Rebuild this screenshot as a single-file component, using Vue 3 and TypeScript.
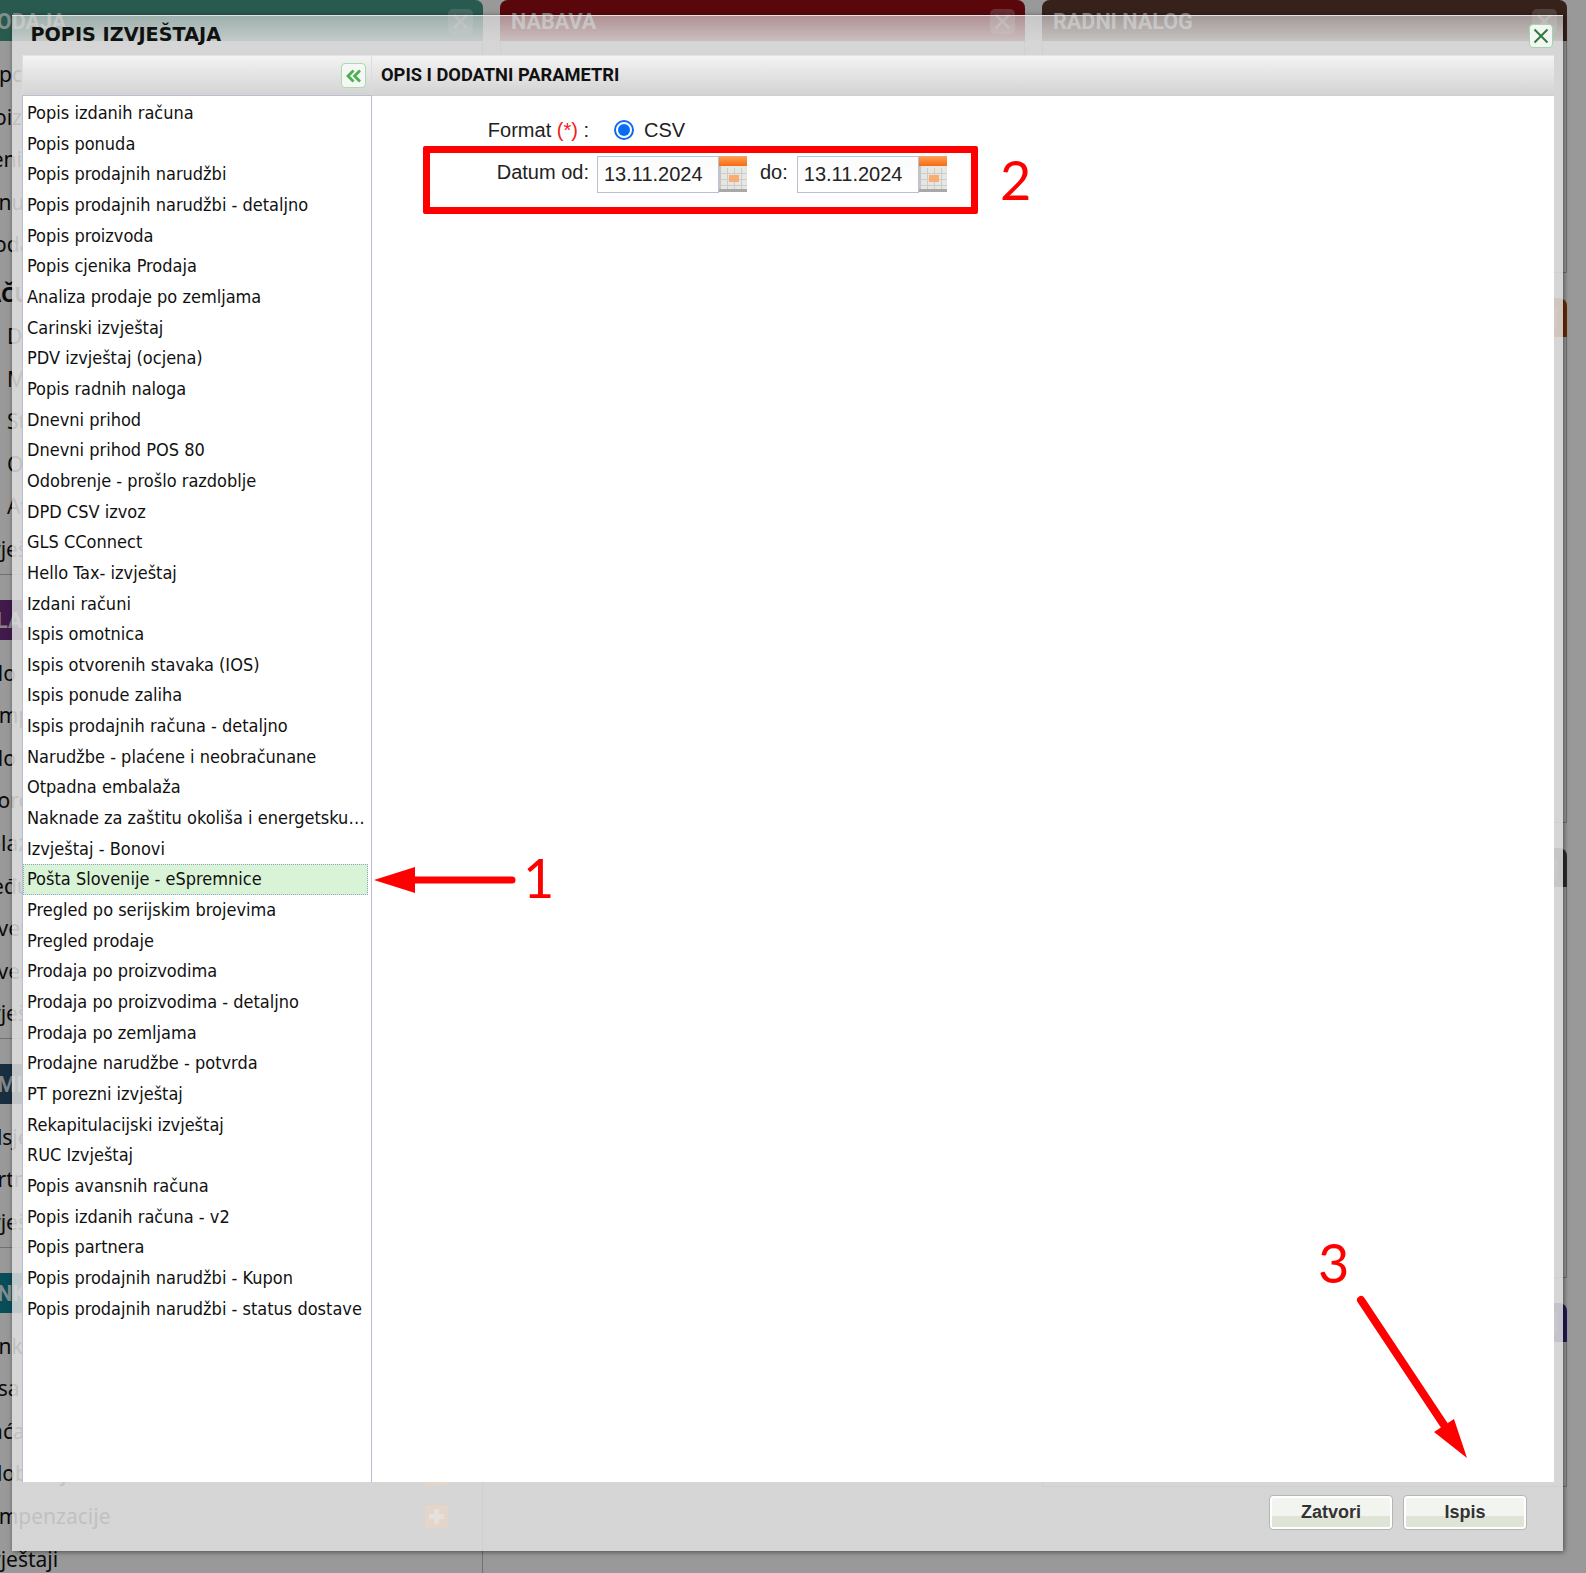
<script setup lang="ts">
interface Row { text: string; sub?: boolean; indent?: boolean; add?: boolean }
interface Panel { title: string; color: string; head: number; rows: Row[] }

const r = (list: string[], indent = false): Row[] => list.map((text) => ({ text, indent }))

const leftPanels: Panel[] = [
  {
    title: 'PRODAJA', color: '#449685', head: 41,
    rows: [
      ...r(['Kupci', 'Proizvodi', 'Cjenici', 'Ponude', 'Prodaja']),
      { text: 'RAČUNI', sub: true },
      ...r(['Dokumenti', 'Maloprodaja', 'Storna', 'Odobrenja', 'Avansi'], true),
      ...r(['Izvještaji']),
    ],
  },
  {
    title: 'SKLADIŠTE', color: '#6a2c7e', head: 40,
    rows: r(['Kalo', 'Kompletiranje', 'Kalo', 'Sporedni', 'Dolazne', 'Međuskladišnica', 'Reverz', 'Reversi', 'Izvještaji']),
  },
  {
    title: 'KOMITENTI', color: '#2b4d6a', head: 40,
    rows: r(['Odsjeci', 'Partneri', 'Izvještaji']),
  },
  {
    title: 'BANKA', color: '#0f8094', head: 40,
    rows: [
      ...r(['Banke', 'Kasa', 'Plaćanja']),
      { text: 'Odobrenja', add: true },
      { text: 'Kompenzacije', add: true },
      { text: 'Izvještaji' },
    ],
  },
]

const middleTitle = 'NABAVA'
const rightPanels = [
  { title: 'RADNI NALOG', color: '#5c372d', head: 41, height: 273 },
  { title: 'FINANCIJE', color: '#b04a08', head: 39, height: 525 },
  { title: 'SERVIS', color: '#4a4a4a', head: 39, height: 430 },
  { title: 'POSTAVKE', color: '#3a2a90', head: 39, height: 184 },
]

const reports = [
  'Popis izdanih računa', 'Popis ponuda', 'Popis prodajnih narudžbi', 'Popis prodajnih narudžbi - detaljno',
  'Popis proizvoda', 'Popis cjenika Prodaja', 'Analiza prodaje po zemljama', 'Carinski izvještaj',
  'PDV izvještaj (ocjena)', 'Popis radnih naloga', 'Dnevni prihod', 'Dnevni prihod POS 80',
  'Odobrenje - prošlo razdoblje', 'DPD CSV izvoz', 'GLS CConnect', 'Hello Tax- izvještaj', 'Izdani računi',
  'Ispis omotnica', 'Ispis otvorenih stavaka (IOS)', 'Ispis ponude zaliha', 'Ispis prodajnih računa - detaljno',
  'Narudžbe - plaćene i neobračunane', 'Otpadna embalaža', 'Naknade za zaštitu okoliša i energetsku ...',
  'Izvještaj - Bonovi', 'Pošta Slovenije - eSpremnice', 'Pregled po serijskim brojevima', 'Pregled prodaje',
  'Prodaja po proizvodima', 'Prodaja po proizvodima - detaljno', 'Prodaja po zemljama', 'Prodajne narudžbe - potvrda',
  'PT porezni izvještaj', 'Rekapitulacijski izvještaj', 'RUC Izvještaj', 'Popis avansnih računa',
  'Popis izdanih računa - v2', 'Popis partnera', 'Popis prodajnih narudžbi - Kupon',
  'Popis prodajnih narudžbi - status dostave',
]
const selected = 'Pošta Slovenije - eSpremnice'
const dates = [
  { label: 'Datum od:', value: '13.11.2024', cls: 'first' },
  { label: 'do:', value: '13.11.2024', cls: 'second' },
]
</script>

<template>
  <div class="stage">
    <!-- page behind the modal -->
    <div class="columns">
      <div class="column">
        <section v-for="p in leftPanels" :key="p.title" class="panel">
          <header class="panel-head" :style="{ background: p.color, height: p.head + 'px' }">
            <span>{{ p.title }}</span>
            <i class="tile-x"><svg viewBox="0 0 25 25" width="25" height="25"><path d="M6 6 19 19M19 6 6 19" stroke="#fff" stroke-opacity=".5" stroke-width="2.500" fill="none"/></svg></i>
          </header>
          <ul class="panel-rows">
            <li v-for="(row, i) in p.rows" :key="i" :class="{ sub: row.sub, indent: row.indent }">
              <span>{{ row.text }}</span><b v-if="row.add" class="add"><i></i></b>
            </li>
          </ul>
        </section>
      </div>
      <div class="column">
        <section class="panel mid">
          <header class="panel-head" style="background:#960d14;height:41px">
            <span>{{ middleTitle }}</span>
            <i class="tile-x"><svg viewBox="0 0 25 25" width="25" height="25"><path d="M6 6 19 19M19 6 6 19" stroke="#fff" stroke-opacity=".5" stroke-width="2.500" fill="none"/></svg></i>
          </header>
        </section>
      </div>
      <div class="column">
        <section v-for="p in rightPanels" :key="p.title" class="panel" :style="{ height: p.height + 'px' }">
          <header class="panel-head" :style="{ background: p.color, height: p.head + 'px' }">
            <span>{{ p.title }}</span>
            <i class="tile-x"><svg viewBox="0 0 25 25" width="25" height="25"><path d="M6 6 19 19M19 6 6 19" stroke="#fff" stroke-opacity=".5" stroke-width="2.500" fill="none"/></svg></i>
          </header>
        </section>
      </div>
    </div>
    <div class="overlay"></div>

    <!-- modal -->
    <div class="dialog">
      <div class="dialog-title">
        <h1>POPIS IZVJEŠTAJA</h1>
        <button class="close" aria-label="Zatvori">
          <svg viewBox="0 0 18 18" width="18" height="18"><path d="M2.5 2.5 15.5 15.5M15.5 2.5 2.5 15.5" stroke="#2f7a3d" stroke-width="2" fill="none"/></svg>
        </button>
      </div>
      <div class="body">
        <div class="left">
          <div class="bar bar-left">
            <button class="collapse" aria-label="Sakrij">
              <svg viewBox="0 0 16 14" width="16" height="14"><path d="M7.5 1.5 2 7l5.5 5.5M14 1.5 8.5 7l5.5 5.5" stroke="#4caf50" stroke-width="2.800" fill="none"/></svg>
            </button>
          </div>
          <ul class="reports">
            <li v-for="name in reports" :key="name" :class="{ active: name === selected }">{{ name }}</li>
          </ul>
        </div>
        <div class="right">
          <div class="bar bar-right">OPIS I DODATNI PARAMETRI</div>
          <div class="form">
            <div class="line line-format">
              <label class="lbl">Format <em>(*)</em> :</label>
              <span class="radio"><i></i></span>
              <span class="csv">CSV</span>
            </div>
            <div class="line line-dates">
              <template v-for="d in dates" :key="d.cls">
                <label :class="['date-lbl', d.cls]">{{ d.label }}</label>
                <input class="date" type="text" :value="d.value" readonly />
                <svg class="cal" viewBox="0 0 28 37" width="28" height="37">
                  <defs>
                    <linearGradient id="calTop" x1="0" y1="0" x2="0" y2="1">
                      <stop offset="0" stop-color="#ffa25a"/><stop offset="1" stop-color="#f56c12"/>
                    </linearGradient>
                  </defs>
                  <rect x="0" y="0" width="28" height="10" fill="url(#calTop)"/>
                  <rect x="0" y="10" width="28" height="25" fill="#e6e6e2"/>
                  <rect x="0" y="10" width="2" height="25" fill="#c4c4c0"/>
                  <path d="M0 17.500H28M0 23.500H28M0 29.500H28M8.500 12V34M15.500 12V34M22.500 12V34" stroke="#cdcdc8" stroke-width="1"/>
                  <rect x="10" y="19" width="10" height="7" fill="#f9ac73"/>
                  <rect x="0" y="33" width="28" height="3" fill="#a8a8a8"/>
                </svg>
              </template>
            </div>
          </div>
        </div>
      </div>
      <div class="footer">
        <button class="btn">Zatvori</button>
        <button class="btn">Ispis</button>
      </div>
    </div>

    <!-- red annotations drawn over the screenshot -->
    <div class="red-box"></div>
    <svg class="marks" width="1586" height="1573" viewBox="0 0 1586 1573">
      <path d="M412 880H512" stroke="#f00" stroke-width="7" stroke-linecap="round" fill="none"/>
      <path d="M374 880 415 867 415 893Z" fill="#f00"/>
      <path d="M1361 1300 1446 1428" stroke="#f00" stroke-width="8" stroke-linecap="round" fill="none"/>
      <path d="M1467 1458 1434 1432 1454 1419Z" fill="#f00"/>
    </svg>
    <span class="num n1">1</span>
    <span class="num n2">2</span>
    <span class="num n3">3</span>
  </div>
</template>

<style>
html, body { margin: 0; background: #999; }
</style>

<style scoped>
.stage {
  position: relative;
  width: 1586px;
  height: 1573px;
  overflow: hidden;
  background: #fff;
  font-family: "Noto Sans", sans-serif;
}
ul { list-style: none; margin: 0; padding: 0; }
h1 { margin: 0; }
button { font: inherit; cursor: pointer; }

/* page behind */
.columns {
  display: grid;
  grid-template-columns: 525px 525px 525px;
  column-gap: 17px;
  margin-left: -42px;
}
.panel {
  border: 1px solid #bdbdbd;
  border-top: 0;
  border-radius: 8px 8px 0 0;
  margin-bottom: 25px;
  padding-bottom: 3px;
  box-sizing: border-box;
}
.panel.mid { height: 273px; }
.panel-head {
  display: flex;
  align-items: center;
  justify-content: space-between;
  box-sizing: border-box;
  padding: 0 10px 0 11px;
  margin: 0 -1px;
  border-radius: 8px 8px 0 0;
  color: rgba(255, 255, 255, .85);
  font: 700 21.600px Roboto, sans-serif;
}
.panel-head span { position: relative; top: 1px; }
.tile-x {
  width: 25px;
  height: 25px;
  border-radius: 5px;
  background: rgba(255, 255, 255, .28);
  position: relative;
  top: 1px;
}
.tile-x svg { display: block; }
.panel-rows { padding-top: 12px; }
.panel-rows li {
  height: 42.6px;
  line-height: 42.6px;
  display: flex;
  justify-content: space-between;
  padding: 0 34px 0 14px;
  color: #111;
  font-size: 21px;
}
.panel-rows li.indent { padding-left: 48px; }
.panel-rows li.sub { font-weight: 700; padding-left: 14px; height: 49px; line-height: 56px; }
.add {
  position: relative;
  z-index: 2;
  align-self: center;
  width: 23px;
  height: 23px;
  border-radius: 3px;
  background: #ff9a45;
}
.add i {
  position: absolute;
  left: 4px;
  right: 4px;
  top: 9px;
  height: 5px;
  background: #ffe4ce;
}
.add i::after {
  content: "";
  position: absolute;
  left: 5px;
  top: -5px;
  width: 5px;
  height: 15px;
  background: #ffe4ce;
}
.overlay {
  position: absolute;
  inset: 0;
  z-index: 1;
  background: rgba(0, 0, 0, .4);
}

/* dialog */
.dialog {
  position: absolute;
  z-index: 3;
  left: 12px;
  top: 15px;
  width: 1551px;
  height: 1536px;
  display: flex;
  flex-direction: column;
  background:
    linear-gradient(rgba(224, 224, 224, .64), rgba(224, 224, 224, .85) 26px, rgba(224, 224, 224, .85));
  border-top: 1px solid rgba(235, 235, 235, .75);
  box-sizing: border-box;
  box-shadow: 1px 1px 5px rgba(0, 0, 0, .5);
}
.dialog-title {
  height: 39px;
  flex: none;
  display: flex;
  align-items: center;
  justify-content: space-between;
  padding: 0 10px 0 18.500px;
}
.dialog-title h1 {
  font: 700 19.200px "DejaVu Sans", sans-serif;
  color: #111;
  position: relative;
  top: -1px;
}
.close {
  width: 24px;
  height: 24px;
  padding: 0;
  display: flex;
  align-items: center;
  justify-content: center;
  background: #f3f6f3;
  border: 1px solid #9fd8a8;
  border-radius: 4px;
}
.body {
  flex: 1;
  min-height: 0;
  display: grid;
  grid-template-columns: 350px 1fr;
  margin: 0 9px 0 10px;
}
.left, .right { display: flex; flex-direction: column; min-height: 0; min-width: 0; }
.bar {
  flex: none;
  height: 41px;
  box-sizing: border-box;
  display: flex;
  align-items: center;
  background: linear-gradient(#f3f3f3, #d3d3d3);
  border-top: 1px solid #e4e4e4;
  border-bottom: 1px solid #cfcfcf;
}
.bar-left {
  justify-content: flex-end;
  padding-right: 5px;
  border-left: 1px solid #dcdcdc;
  border-right: 1px solid #dcdcdc;
}
.bar-right {
  padding: 0 0 2px 9px;
  font: 700 18.300px Roboto, sans-serif;
  color: #111;
}
.collapse {
  width: 25px;
  height: 25px;
  padding: 0;
  display: flex;
  align-items: center;
  justify-content: center;
  background: #f4f7f4;
  border: 1px solid #a6dcae;
  border-radius: 4px;
}
.reports {
  flex: 1;
  background: #fff;
  border-left: 1px solid #b9bdd2;
  border-right: 1px solid #b9bdd2;
  border-top: 1px solid #b9bdd2;
  padding-top: 2px;
  margin-top: -1px;
}
.reports li {
  height: 30.660px;
  line-height: 30.660px;
  box-sizing: border-box;
  padding: 0 4px;
  font-family: "DejaVu Sans", sans-serif;
  font-stretch: condensed;
  font-size: 18px;
  color: #111;
  white-space: nowrap;
  overflow: hidden;
  text-overflow: ellipsis;
}
.reports li.active {
  background: #d9f3d6;
  outline: 1px dotted #8da6c4;
  outline-offset: -1px;
  margin-right: 3px;
}
.form { flex: 1; background: #fff; }
.line { display: flex; align-items: center; font: 20px "Liberation Sans", sans-serif; color: #222; }
.line-format { height: 24px; margin-top: 22px; }
.lbl { width: 217px; text-align: right; }
.lbl em { color: #e22; font-style: normal; }
.radio {
  width: 20px;
  height: 20px;
  margin-left: 25px;
  box-sizing: border-box;
  border: 2px solid #0a6cf5;
  border-radius: 50%;
  display: flex;
  align-items: center;
  justify-content: center;
}
.radio i { width: 12px; height: 12px; border-radius: 50%; background: #0a6cf5; }
.csv { margin-left: 10px; }
.line-dates { height: 37px; margin-top: 14px; }
.date-lbl { position: relative; top: -2px; }
.date-lbl.first { width: 217px; text-align: right; margin-right: 8px; }
.date-lbl.second { margin: 0 9px 0 13px; }
.date {
  width: 122px;
  height: 37px;
  box-sizing: border-box;
  padding: 0 0 0 6px;
  border: 1px solid #bcc0d4;
  background: linear-gradient(#fbfbfb, #fff);
  font: 20px "Liberation Sans", sans-serif;
  color: #222;
  outline: 0;
}
.cal { flex: none; }
.footer {
  flex: none;
  height: 69px;
  display: flex;
  justify-content: flex-end;
  align-items: flex-start;
  gap: 10px;
  padding: 13px 36px 0 0;
  box-sizing: border-box;
}
.btn {
  width: 124px;
  height: 35px;
  padding: 0;
  border: 1px solid #b4b8b4;
  border-radius: 4px;
  box-shadow: inset 0 0 0 2px #fff;
  background: linear-gradient(#f2f4f0 0, #f2f4f0 60%, #dfe5d6 60%, #dfe5d6 100%);
  color: #333;
  font: 700 18px "Liberation Sans", sans-serif;
}

/* annotations */
.red-box {
  position: absolute;
  z-index: 4;
  left: 423px;
  top: 146px;
  width: 555px;
  height: 68px;
  box-sizing: border-box;
  border: 7px solid #f00;
  border-radius: 2px;
  pointer-events: none;
}
.marks { position: absolute; z-index: 4; left: 0; top: 0; pointer-events: none; }
.num {
  position: absolute;
  z-index: 4;
  color: #f00;
  font: 400 54px/1 Lato, sans-serif;
}
.n1 { left: 523px; top: 851px; }
.n2 { left: 1000px; top: 153px; }
.n3 { left: 1318px; top: 1236px; }
</style>
